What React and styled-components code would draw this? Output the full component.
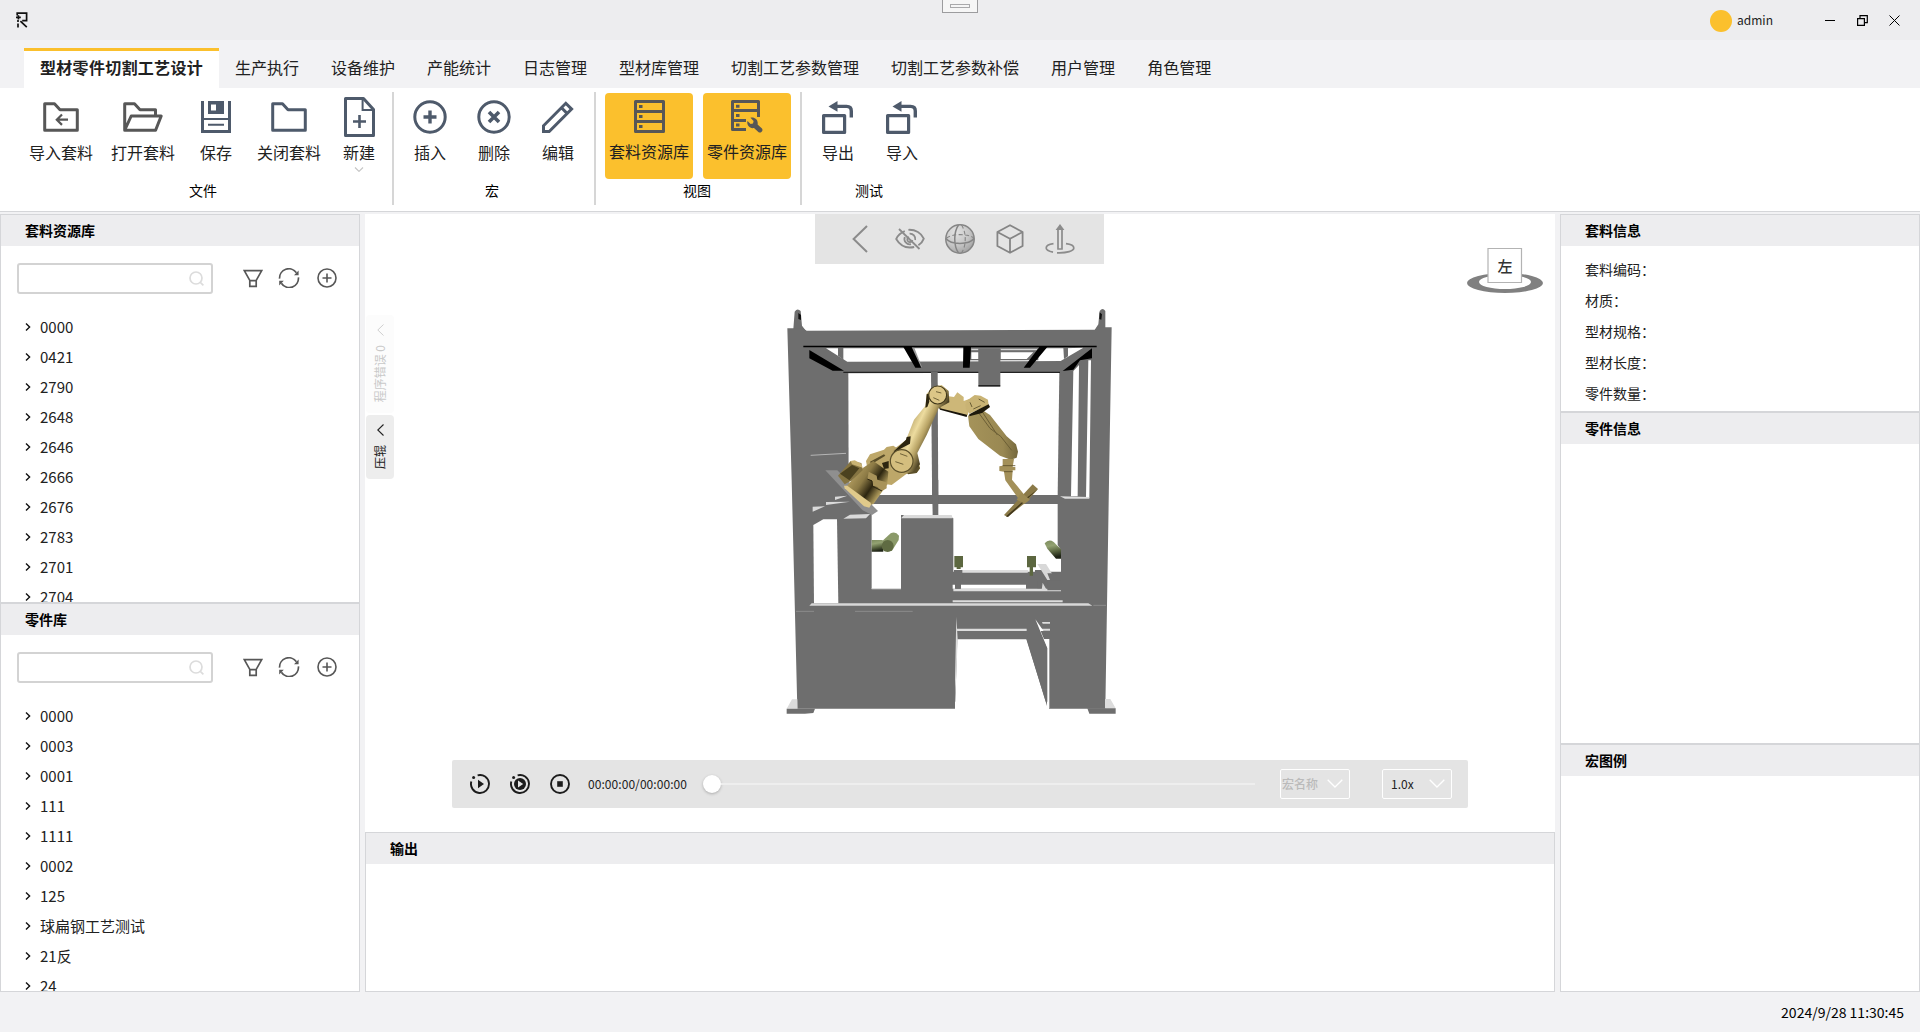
import React from 'react';
import styled, { createGlobalStyle } from 'styled-components';

const Global = createGlobalStyle`
  *, *::before, *::after { box-sizing: border-box; }
  body { margin: 0; background: #f2f2f4; overflow: hidden; }
  svg { display: block; flex: none; }
`;

const line = '#d5d6d9';
const slate = '#4e5a6b';
const dark = '#575757';

const Window = styled.div`
  width: 1920px;
  height: 1032px;
  display: flex;
  flex-direction: column;
  background: #f2f2f4;
  color: #212121;
  font-family: 'Noto Sans CJK SC', 'Noto Sans', sans-serif;
  font-size: 14px;
  line-height: 20px;
  white-space: nowrap;
`;

/* ---------- title bar ---------- */

const TitleBar = styled.header`
  position: relative;
  height: 40px;
  flex: none;
  display: flex;
  align-items: center;
  padding: 0 10px 0 16px;
  background: #ededef;
`;
const DragHandle = styled.div`
  position: absolute;
  left: 942px;
  top: -2px;
  width: 36px;
  height: 15px;
  border: 1px solid #9c9c9e;
  background: #f6f6f6;
  display: flex;
  align-items: center;
  justify-content: center;
  &::after {
    content: '';
    width: 20px;
    height: 4px;
    border: 1px solid #a9a9ab;
  }
`;
const UserBox = styled.div`
  margin-left: auto;
  display: flex;
  align-items: center;
  gap: 5px;
  font-size: 12px;
  line-height: 18px;
  padding-bottom: 1px;
`;
const Avatar = styled.i`
  width: 22px;
  height: 22px;
  margin-top: 3px;
  border-radius: 50%;
  background: #fbc02d;
`;
const WindowButtons = styled.div`
  display: flex;
  margin-left: 41px;
`;
const WindowButton = styled.button`
  width: 32px;
  height: 32px;
  padding: 0;
  border: 0;
  background: none;
  display: flex;
  align-items: center;
  justify-content: center;
`;

/* ---------- tabs ---------- */

const TabBar = styled.nav`
  height: 48px;
  flex: none;
  display: flex;
  align-items: flex-end;
  padding-left: 24px;
`;
const Tab = styled.a`
  height: 40px;
  width: ${(p) => (p.$active ? '195px' : 'auto')};
  padding: 0 16px;
  border-top: 3px solid ${(p) => (p.$active ? '#fbc02d' : 'transparent')};
  background: ${(p) => (p.$active ? '#fff' : 'transparent')};
  font-size: 16px;
  font-weight: ${(p) => (p.$active ? 700 : 400)};
  letter-spacing: ${(p) => (p.$active ? '0.3px' : '0')};
  line-height: 32px;
`;

/* ---------- ribbon ---------- */

const Ribbon = styled.section`
  height: 124px;
  flex: none;
  display: flex;
  padding-top: 4px;
  background: #fff;
  border-bottom: 1px solid ${line};
`;
const Group = styled.div`
  width: ${(p) => p.$width}px;
  height: 113px;
  padding: 1px ${(p) => p.$end || 0}px 0 ${(p) => p.$start || 0}px;
  border-right: ${(p) => (p.$last ? '0' : '2px solid #d6d6d6')};
  display: flex;
  flex-direction: column;
`;
const GroupTools = styled.div`
  display: flex;
  gap: ${(p) => p.$gap || 0}px;
`;
const GroupLabel = styled.div`
  margin-top: 1px;
  padding-right: ${(p) => p.$shift || 4}px;
  text-align: center;
  color: #000;
`;
const Tool = styled.button`
  width: ${(p) => p.$width || 64}px;
  height: 86px;
  padding: 2px 0 0;
  border: 0;
  border-radius: 4px;
  background: ${(p) => (p.$active ? '#fbc02d' : 'none')};
  font: 16px/24px 'Noto Sans CJK SC', sans-serif;
  color: #212121;
  display: flex;
  flex-direction: column;
  align-items: center;
  svg + svg { margin: 0; }
`;
const ToolIcon = styled.span`
  height: 44px;
  margin-bottom: ${(p) => (p.$active ? 0 : 1)}px;
  padding-bottom: ${(p) => (p.$active ? 2 : 0)}px;
  display: flex;
  align-items: center;
`;
const DropMark = styled.span`
  margin-top: 3px;
`;

/* ---------- panels ---------- */

const Workspace = styled.main`
  height: 780px;
  flex: none;
  display: grid;
  grid-template-columns: 360px 1190px 360px;
  column-gap: 5px;
  padding-top: 2px;
`;
const Column = styled.div`
  display: flex;
  flex-direction: column;
  min-height: 0;
`;
const Panel = styled.section`
  height: ${(p) => p.$height}px;
  flex: none;
  overflow: hidden;
  background: #fff;
  border: 1px solid ${line};
`;
const PanelHeader = styled.h2`
  margin: 0;
  height: 31px;
  padding-left: 24px;
  background: #ededef;
  color: #000;
  font-size: 14px;
  font-weight: 700;
  line-height: 31px;
`;
const SearchRow = styled.div`
  display: flex;
  align-items: center;
  padding: 17px 0 0 16px;
`;
const SearchBox = styled.div`
  width: 196px;
  height: 31px;
  border: 2px solid #d3d3d3;
  border-radius: 3px;
  display: flex;
  align-items: center;
  justify-content: flex-end;
  padding-right: 7px;
`;
const SearchTools = styled.div`
  display: flex;
  align-items: center;
  margin-left: 30px;
  gap: 15px;
  padding-bottom: 1px;
  svg:last-child { margin-left: 2px; }
`;
const Tree = styled.ul`
  list-style: none;
  margin: 0;
  padding: 18px 0 0 24px;
`;
const TreeItem = styled.li`
  height: 30px;
  display: flex;
  align-items: center;
  gap: 9px;
  font-size: 15px;
  line-height: 30px;
`;
const InfoList = styled.div`
  padding: 8px 0 0 24px;
`;
const InfoRow = styled.div`
  height: 31px;
  line-height: 31px;
`;

/* ---------- viewport ---------- */

const Viewport = styled.section`
  position: relative;
  height: 618px;
  flex: none;
  overflow: hidden;
  background: #fff;
`;
const Scene = styled.svg`
  position: absolute;
  left: 395px;
  top: -9px;
`;
const ViewTools = styled.div`
  position: absolute;
  left: 450px;
  top: 0;
  width: 289px;
  height: 50px;
  padding: 0 0 0 20px;
  display: flex;
  align-items: center;
  background: #e4e4e4;
`;
const ViewTool = styled.button`
  width: 50px;
  height: 50px;
  padding: 0;
  border: 0;
  background: none;
  display: flex;
  align-items: center;
  justify-content: center;
`;
const SideTabs = styled.div`
  position: absolute;
  left: 1px;
  top: 101px;
  display: flex;
  flex-direction: column;
  gap: 2px;
`;
const SideTab = styled.div`
  width: 28px;
  height: ${(p) => p.$height}px;
  padding: 9px 0 0;
  border-radius: 4px;
  background: ${(p) => (p.$muted ? '#fcfcfc' : '#ededed')};
  color: ${(p) => (p.$muted ? '#c9c9c9' : '#212121')};
  display: flex;
  flex-direction: column;
  align-items: center;
  gap: 9px;
  font-size: 12px;
  line-height: 16px;
  span {
    writing-mode: vertical-rl;
    text-orientation: sideways;
    transform: rotate(180deg);
  }
`;
const ViewCube = styled.svg`
  position: absolute;
  left: 1100px;
  top: 29px;
`;
const Player = styled.div`
  position: absolute;
  left: 87px;
  top: 546px;
  width: 1016px;
  height: 48px;
  padding: 0 16px 0 18px;
  border-radius: 2px;
  background: #e4e4e4;
  display: flex;
  align-items: center;
  font-size: 12px;
`;
const PlayerButtons = styled.div`
  display: flex;
  gap: 20px;
`;
const Time = styled.span`
  width: 98px;
  margin: 0 0 1px 18px;
  letter-spacing: 0.06px;
`;
const Slider = styled.div`
  width: 552px;
  margin-left: 17px;
  height: 18px;
  display: flex;
  align-items: center;
  &::after {
    content: '';
    flex: 1;
    height: 2px;
    background: #eeeeee;
  }
`;
const Thumb = styled.i`
  width: 18px;
  height: 18px;
  border-radius: 50%;
  background: #fff;
  box-shadow: 0 1px 3px rgba(0, 0, 0, 0.25);
`;
const Select = styled.div`
  width: 70px;
  height: 30px;
  margin-left: ${(p) => p.$gap}px;
  padding: 0 6px 1px ${(p) => p.$pad}px;
  border: 1px solid #fff;
  border-radius: 2px;
  color: ${(p) => (p.$muted ? '#bababa' : '#212121')};
  font-weight: ${(p) => (p.$muted ? 500 : 400)};
  display: flex;
  align-items: center;
  justify-content: space-between;
`;

const StatusBar = styled.footer`
  flex: 1;
  display: flex;
  align-items: center;
  justify-content: flex-end;
  padding: 0 16px 0 0;
  color: #000;
`;

/* ---------- icons ---------- */

const Svg = ({ w, h = w, vb, color = slate, sw = 3, children }) => (
  <svg width={w} height={h} viewBox={vb || `0 0 ${w} ${h}`} fill="none" stroke={color} strokeWidth={sw}>
    {children}
  </svg>
);

const Logo = () => (
  <Svg w={14} h={17} color="#111" sw={1.7}>
    <path d="M1.2 3.4V1.1H10.6V8.7H6.2M2 8V10M2 11.5V15.6M4.4 9.2L10.8 15.2M0 5.4H4.8M2.4 3.2V7.6" />
  </Svg>
);
const FolderImport = () => (
  <Svg w={36} h={30} color={dark}>
    <path strokeLinejoin="round" d="M1.7 28.2V1.8H11.5L17 7.7H34.3V28.2Z" />
    <path strokeWidth="2.2" d="M25 17.7H14M19 12.5L13.8 17.7L19 22.9" />
  </Svg>
);
const FolderOpen = () => (
  <Svg w={40} h={30} color={dark}>
    <path strokeLinejoin="round" d="M1.7 28.2V1.8H11.5L17 7.7H32.5V13.6M1.7 28.2L8.2 14H38.2L32.6 28.2Z" />
  </Svg>
);
const Save = () => (
  <Svg w={30} h={32}>
    <path strokeWidth="3" d="M1.5 0V30.5H28.5V0" />
    <path strokeWidth="2" d="M2 18H28M7 23.8H23" />
    <path fill={slate} stroke="none" fillRule="evenodd" d="M7 0H23V13H7ZM10 3.5H15V9.5H10Z" />
  </Svg>
);
const Folder = () => (
  <Svg w={36} h={30}>
    <path strokeLinejoin="round" d="M1.7 28.2V1.8H11.5L17 7.7H34.3V28.2Z" />
  </Svg>
);
const NewFile = () => (
  <Svg w={31} h={40}>
    <path strokeLinejoin="round" d="M1.5 38.5V1.5H19.5L29.5 12.5V38.5Z" />
    <path strokeWidth="2" d="M18.6 2V13H29" />
    <path strokeWidth="2.6" d="M15.5 18V31M9 24.5H22" />
  </Svg>
);
const Insert = () => (
  <Svg w={34}>
    <circle cx="17" cy="17" r="15.2" />
    <path strokeWidth="3.4" d="M17 10.5V23.5M10.5 17H23.5" />
  </Svg>
);
const Remove = () => (
  <Svg w={34}>
    <circle cx="17" cy="17" r="15.2" />
    <path strokeWidth="3.6" d="M12 12L22 22M22 12L12 22" />
  </Svg>
);
const Edit = () => (
  <Svg w={32}>
    <path d="M1.5 30.5V24.8L23.8 2.3L29.6 8.1L7.2 30.5ZM19.5 6.8L25.3 12.6" />
  </Svg>
);
const Rack = () => (
  <Svg w={31} h={33} color={dark}>
    <path strokeLinejoin="round" d="M1.5 1.5H29.5V31.5H1.5ZM1.5 11.5H29.5M1.5 21.5H29.5" />
    <path d="M5 6.5H8.5M5 16.5H8.5M5 26.5H8.5" />
  </Svg>
);
const RackTool = () => (
  <Svg w={32} h={33} color={dark}>
    <path strokeLinejoin="round" d="M27.5 17V1.5H1.5V29.5H15M1.5 10.5H27.5M1.5 20.5H15" />
    <path d="M5 6.2H8.5M5 15.5H8.5M5 25H8.5" />
    <path fill={dark} stroke="none" d="M19.4 17.8L22.6 21L22 23.4L19.6 24L16.5 21C15.4 24.6 18.2 29 23 28L27.6 32.3C29.8 33.6 32.6 30.6 31 28.6L26.6 24.4C27.6 19.6 23 16.4 19.4 17.8Z" />
  </Svg>
);
const Export = () => (
  <Svg w={32} h={33}>
    <path strokeWidth="3.2" strokeLinejoin="round" d="M1.6 14.6H22.6V31.4H1.6Z" />
    <path strokeWidth="3.4" d="M12 5.4H24.6Q29.3 5.4 29.3 10V16.5" />
    <path fill={slate} stroke="none" d="M6.5 5.4L15.5 0V10.8Z" />
  </Svg>
);
const Chevron = ({ w, h, d, color, sw }) => (
  <Svg w={w} h={h} color={color} sw={sw}>
    <path d={d} />
  </Svg>
);
const SearchIcon = () => (
  <Svg w={15} h={15} color="#dcdcdc" sw={1.7}>
    <circle cx="7" cy="7" r="6" />
    <path d="M11.3 11.3L14.4 14.4" />
  </Svg>
);
const Filter = () => (
  <Svg w={20} h={19} color={dark} sw={1.7}>
    <path d="M1.3 1.6H18.7L13.2 11.4V17.4H6.8V11.4ZM6.8 11.6H13.2" />
  </Svg>
);
const Refresh = () => (
  <Svg w={22} h={20} color={dark} sw={1.7}>
    <path d="M1.6 10.6A9.2 9.2 0 0 1 18.4 4.8M20.4 9.4A9.2 9.2 0 0 1 3.4 15.2" />
    <path fill={dark} stroke="none" d="M20.6 2.6V7.2H16ZM1.2 17.4V12.8H5.8Z" />
  </Svg>
);
const Plus = () => (
  <Svg w={20} color={dark} sw={1.6}>
    <circle cx="10" cy="10" r="9" />
    <path d="M10 5.5V14.5M5.5 10H14.5" />
  </Svg>
);
const EyeOff = () => (
  <Svg w={30} h={22} color="#8b8b8b" sw={1.8}>
    <path d="M9.8 3.2C5 5 2.4 8.4 1.2 11C5 17.6 11.5 20.6 19.2 19M13.4 1.8C20.5 1.4 26.5 5.4 28.8 10.6C28 13 26 15.4 23.4 17.2" />
    <path d="M14.6 5.6A5.4 5.4 0 0 1 20.2 12M9.8 9A5.4 5.4 0 0 0 16 16.2M14 9A2.6 2.6 0 1 0 17.4 12" />
    <path d="M4 1L24.5 21" />
  </Svg>
);
const Globe = () => (
  <Svg w={30} color="#858585" sw={1.5}>
    <defs>
      <radialGradient id="globe" cx="35%" cy="25%" r="80%">
        <stop offset="0" stopColor="#e2e2e2" />
        <stop offset="0.6" stopColor="#c6c6c6" />
        <stop offset="1" stopColor="#a2a2a2" />
      </radialGradient>
    </defs>
    <circle cx="15" cy="15" r="14.2" fill="url(#globe)" />
    <path d="M1 14.5C6 21 24 21 29 14.5M13.5 1C8.5 8 8.5 22 13.5 29" />
    <path strokeDasharray="4 2.4" strokeWidth="1.1" d="M1.5 14C7 9.5 23 9.5 28.6 14M16.5 1C21.5 8 21.5 22 16.5 29" />
  </Svg>
);
const Cube = () => (
  <Svg w={28} h={30} color="#858585" sw={1.8}>
    <path strokeLinejoin="round" d="M14 1.2L26.6 8V22L14 28.8L1.4 22V8ZM1.4 8L14 14.8L26.6 8M14 14.8V28.8" />
  </Svg>
);
const Axis = () => (
  <Svg w={30} color="#8b8b8b" sw={1.7}>
    <path fill="#8b8b8b" stroke="none" d="M15 0L19.4 6H10.6Z" />
    <path d="M13 25V5.5M17 5.5V25M12.2 25H17.8" />
    <path d="M8.5 19.6C3.5 20.2 1.2 22 1.2 24C1.2 26.2 4.4 27.4 8 28.2M12 28.8C22 29.2 28.8 27 28.8 24C28.8 21.8 25.8 20.2 21 19.6" />
  </Svg>
);
const Play = () => (
  <Svg w={20} color="#1c1c1c" sw={1.9}>
    <path d="M7.6 1.3A9 9 0 1 1 1.3 7.6" />
    <circle cx="3.6" cy="3.6" r="1.5" fill="#1c1c1c" stroke="none" />
    <path fill="#1c1c1c" stroke="none" d="M8 5.8L14 10L8 14.2Z" />
  </Svg>
);
const PlayAll = () => (
  <Svg w={20} color="#1c1c1c" sw={1.9}>
    <path d="M7.6 1.3A9 9 0 1 1 1.3 7.6" />
    <circle cx="3.6" cy="3.6" r="1.5" fill="#1c1c1c" stroke="none" />
    <circle cx="10" cy="10" r="6" fill="#1c1c1c" stroke="none" />
    <path fill="#e4e4e4" stroke="none" d="M8 6.6L13.2 10L8 13.4Z" />
  </Svg>
);
const Stop = () => (
  <Svg w={20} color="#1c1c1c" sw={1.9}>
    <circle cx="10" cy="10" r="9" />
    <path fill="#1c1c1c" stroke="none" d="M7.2 7.2H12.8V12.8H7.2Z" />
  </Svg>
);

/* ---------- robot cell model ---------- */

const Cell = () => (
  <Scene width="400" height="525" viewBox="0 0 1200 1575">
    <defs>
      <linearGradient id="arm" gradientUnits="userSpaceOnUse" x1="440" y1="640" x2="530" y2="682">
        <stop offset="0" stopColor="#a8935a" />
        <stop offset="0.4" stopColor="#eddc9f" />
        <stop offset="0.65" stopColor="#b8a365" />
        <stop offset="1" stopColor="#2a230f" />
      </linearGradient>
      <linearGradient id="base" gradientUnits="userSpaceOnUse" x1="275" y1="800" x2="375" y2="868">
        <stop offset="0" stopColor="#b7a163" />
        <stop offset="0.35" stopColor="#8c7a45" />
        <stop offset="0.62" stopColor="#2c2510" />
        <stop offset="0.85" stopColor="#a08d52" />
        <stop offset="1" stopColor="#dcc687" />
      </linearGradient>
      <linearGradient id="fore" x1="0" y1="0" x2="1" y2="0">
        <stop offset="0" stopColor="#a5935a" />
        <stop offset="0.7" stopColor="#998852" />
        <stop offset="1" stopColor="#75683d" />
      </linearGradient>
      <linearGradient id="green" x1="0" y1="0" x2="0.2" y2="1">
        <stop offset="0" stopColor="#7d8c5e" />
        <stop offset="0.35" stopColor="#93a272" />
        <stop offset="0.65" stopColor="#5f6b45" />
        <stop offset="1" stopColor="#1f2416" />
      </linearGradient>
    </defs>

    {/* lifting lugs */}
    <path fill="#6e6e6e" d="M100 372L104 320Q112 308 122 318L126 362L140 380H100ZM1036 370L1036 318Q1028 306 1019 318L1015 358L1002 378Z" />
    <path fill="#111" d="M115 324L123 330V345L115 342ZM1019 322L1026 328L1024 344L1018 342Z" />

    {/* outer shell */}
    <path fill="#6e6e6e" d="M82 370H128L140 377L1005 374L1012 367H1055L1047 830L1036 1511H867V1490H585V1511H112L95 825Z" />
    {/* upper opening */}
    <path fill="#fff" d="M198 430H912L970 428L902 468L262 470Z" />
    <path fill="#6e6e6e" d="M234 428H250V464L234 452ZM910 428H924V454L912 462Z" />
    <path fill="#000" d="M130 422H1010V427H130ZM148 435L252 497H218L148 460ZM996 430V460L960 466L940 494L908 498Z" />
    <path fill="#9a9a9a" d="M455 428H463L486 487H480Z" />
    <path fill="#6e6e6e" d="M630 430H835V466H630Z" />
    <path fill="#fff" d="M722 442H820L800 462H722ZM634 442H656V462H634Z" />
    <path stroke="#e4e4e4" strokeWidth="3" d="M634 434H656M722 434H832" />
    <path fill="#000" d="M430 426H455L484 488H466ZM610 426H633L629 488H609ZM838 426H862L810 488H791Z" />

    {/* main opening */}
    <path fill="#fff" d="M265 505L898 503L893 870H266Z" />
    <path fill="#222" d="M250 500H900V504H250Z" />
    <path fill="#6e6e6e" d="M513 500H533L535 932H517Z" />
    <path fill="#6e6e6e" d="M655 430H721V541H655Z" />
    <path fill="#222" d="M655 540H721V545H655Z" />
    <path fill="#fff" d="M940 498L957 480L953 874H933ZM985 466H993L988 878H978Z" />
    <path fill="#ddd" d="M900 874L915 881H988V876Z" />
    <path stroke="#b5b5b5" strokeWidth="3" d="M152 751L258 745" />

    {/* lower openings */}
    <g transform="translate(0 825)">
      <path fill="#fff" d="M335 72H893V195L903 210V275H580V115L560 105H423V326H335Z" />
      <path fill="#fff" d="M160 135L190 118H231L235 370H162Z" />
      <path fill="#6e6e6e" d="M516 0H535V106H518Z" />
      <path fill="#6e6e6e" d="M423 115H578V372H423Z" />
      <path fill="#dadada" d="M423 115L432 105H575L578 115ZM158 95V80L195 79ZM198 75V66L270 65ZM225 60V50L262 47ZM250 116L270 104L330 102L318 115Z" />
      <path fill="#dcdcdc" d="M606 270H805L803 278H604ZM580 326H860L903 330V334H580ZM578 361H908V367H578ZM335 324H423V328H335Z" />
      <path fill="#fff" d="M603 314H798V326H603ZM578 314H585V326H578Z" />
      <path fill="#6e6e6e" d="M582 270H607V303H602V326H586V303H582ZM825 270H852V303H845V325H832V303H825Z" />
      <path fill="#d8d8d8" d="M832 252H858L888 300H862ZM148 377L155 370H985L997 377ZM848 308L860 330H845Z" />
      <path fill="#6e6e6e" d="M862 280H903V300H870ZM862 302H903V331H862Z" />
      <path stroke="#9c9c9c" strokeWidth="2" d="M108 394H162M285 394H458M1000 376H1038" />

      <path fill="#fff" d="M592 478H799L862 680L867 692H585Z" />
      <path fill="#dcdcdc" d="M590 446H800V453H592ZM840 446H870V452H842ZM846 426H870V431H848ZM589 410L593 478L587 640L585 600Z" />
      <path fill="#fff" d="M826 418L868 478V685L862 682V505Z" />
      <path fill="#6e6e6e" d="M842 453H870V477H852ZM800 478L824 420L861 505V678Z" />
      <path fill="#dcdcdc" d="M80 686L96 658H112V686ZM1035 657H1051L1067 685H1035Z" />
      <path fill="#6e6e6e" d="M80 686H165L160 699L135 701H80ZM982 685H1067V701H988Z" />

      {/* rollers */}
      <path fill="url(#green)" d="M335 180L368 180L370 215H335Z" />
      <path fill="#8b9a69" d="M366 184L392 160Q406 152 417 167L416 180L396 212L372 214Z" />
      <ellipse cx="383" cy="198" rx="18" ry="18" fill="#5f6b42" />
      <path fill="url(#green)" d="M854 190Q866 176 881 186L903 208V236H888L862 206Z" />
      <path fill="#5c6740" d="M583 228H609V262H602V267H590V262H583ZM801 228H828V262H819V287H809V262H801Z" />
    </g>

    {/* wrist and forearm */}
    <path fill="#8f8f8f" d="M196 796L232 796L354 918L336 930L308 916Z" />
    <path fill="#17130a" d="M535 604L622 628L620 636L540 614Z" />
    <path fill="#cdb778" d="M556 572L582 576L592 562L611 576V588L628 582L624 630L540 610Z" />
    <path fill="url(#fore)" d="M624 632L662 612L690 630L740 694L768 718L774 740L770 758L752 764L720 752L655 702L628 664Z" />
    <path stroke="#6b5e35" strokeWidth="3" fill="none" d="M655 622L690 670L722 694L755 736M664 616L712 690" />
    <path fill="#c9b374" d="M616 600L622 586L644 570L662 572L684 584L686 600L660 612L628 626L618 612Z" />
    <path stroke="#6b5e35" strokeWidth="3" fill="none" d="M630 592L636 606M656 582L674 592M640 612L662 602" />
    <path fill="#1e190b" d="M686 598L690 606L666 624L628 634L628 628L662 610Z" />
    <path fill="#a39059" d="M728 762H762L758 786H766V796H758L756 824L800 878L784 893L736 826L732 800L718 798V784L728 782Z" />
    <path stroke="#5b4f2a" strokeWidth="2.5" fill="none" d="M728 782H766M732 800H758" />
    <path fill="#8b7a48" d="M818 838L834 852L800 890L742 936L732 930Z" />
    <path fill="#40371b" d="M834 852L744 936L738 934L806 874Z" />
    <path fill="#9c8a53" d="M784 862L810 884L794 896L770 884Z" />

    {/* turntable and main link */}
    <path fill="#bda769" d="M318 768L330 748L372 734L380 726L400 722L420 735L478 775L480 790L470 804L440 806L395 840L330 830Z" />
    <path fill="#5b4f2a" d="M440 800L474 778L480 790L470 804L444 808ZM330 770L372 748L376 752L334 778Z" />
    <path fill="url(#arm)" d="M496 608L500 566L520 545L545 540L566 558L568 592L536 610L500 690L472 744L480 778L460 800L430 808L395 792L390 760L402 732L438 705L462 644L498 600Z" />
    <path fill="#2c2510" d="M402 738L438 704L440 696L452 694L450 716L420 732L398 764ZM496 608L500 568L506 566L508 590L502 606Z" />
    <circle cx="533" cy="570" r="27" fill="#dcc687" stroke="#40371b" strokeWidth="3.5" />
    <circle cx="425" cy="768" r="34" fill="#d4be7e" stroke="#5b4f2a" strokeWidth="3.5" />
    <path stroke="#5b4f2a" strokeWidth="2.5" fill="none" d="M420 746L442 754M406 770L430 778M520 578L538 586M528 560L544 564" />
    <path fill="url(#base)" d="M304 792L340 768L385 800L382 838L340 898L318 900L258 846Z" />
    <path fill="#857442" d="M234 812L272 768L304 774L308 796L276 826L254 838Z" />
    <path fill="#4b411f" d="M240 806L276 780L298 790L268 826Z" />
    <path fill="#c9b374" d="M272 768L284 766L304 776L308 788L276 778Z" />
    <path fill="#e0ca8b" d="M252 842L262 842L330 892L334 898L328 908L312 904L254 850Z" />
    <path fill="#2c2510" d="M366 774L386 768V790L372 792Z" />
    <path fill="#a8935a" d="M326 800L350 812L352 824L380 832L380 850L366 858L352 846L338 842L336 826L322 822Z" />
    <path stroke="#2c2510" strokeWidth="3" fill="none" d="M322 822L336 828L338 844L366 858" />
  </Scene>
);

const Orientation = () => (
  <ViewCube width="90" height="60" viewBox="0 0 90 60">
    <path fill="#808080" fillRule="evenodd" d="M2 40A38 10 0 0 1 78 40A38 10 0 0 1 2 40ZM14 39A26 7 0 0 0 66 39A26 7 0 0 0 14 39Z" />
    <path fill="#fff" stroke="#b3b3b3" strokeWidth="1.2" d="M23 5.5H56.5V39.5H23Z" />
    <text x="40" y="28.5" textAnchor="middle" fontFamily="'Noto Sans CJK SC', sans-serif" fontSize="15" fontWeight="500" fill="#333">左</text>
  </ViewCube>
);

/* ---------- data ---------- */

const tabs = ['型材零件切割工艺设计', '生产执行', '设备维护', '产能统计', '日志管理', '型材库管理', '切割工艺参数管理', '切割工艺参数补偿', '用户管理', '角色管理'];

const groups = [
  {
    label: '文件', width: 394, start: 20, shift: 6,
    tools: [['导入套料', FolderImport, 82], ['打开套料', FolderOpen, 82], ['保存', Save, 64], ['关闭套料', Folder, 82], ['新建', NewFile, 58]],
  },
  { label: '宏', width: 202, start: 4, end: 4, tools: [['插入', Insert], ['删除', Remove], ['编辑', Edit]] },
  { label: '视图', width: 206, start: 9, end: 7, gap: 10, active: true, tools: [['套料资源库', Rack, 88], ['零件资源库', RackTool, 88]] },
  { label: '测试', width: 134, start: 4, last: true, tools: [['导出', Export], ['导入', Export]] },
];

const libraries = [
  { title: '套料资源库', items: ['0000', '0421', '2790', '2648', '2646', '2666', '2676', '2783', '2701', '2704'] },
  { title: '零件库', items: ['0000', '0003', '0001', '111', '1111', '0002', '125', '球扁钢工艺测试', '21反', '24'] },
];

const info = ['套料编码：', '材质：', '型材规格：', '型材长度：', '零件数量：'];

const Library = ({ title, items }) => (
  <Panel $height={389}>
    <PanelHeader>{title}</PanelHeader>
    <SearchRow>
      <SearchBox><SearchIcon /></SearchBox>
      <SearchTools><Filter /><Refresh /><Plus /></SearchTools>
    </SearchRow>
    <Tree>
      {items.map((name) => (
        <TreeItem key={name}>
          <Chevron w={6} h={8} color="#111" sw={1.4} d="M1 0.6L4.6 4L1 7.4" />
          {name}
        </TreeItem>
      ))}
    </Tree>
  </Panel>
);

export default function App() {
  return (
    <Window>
      <Global />
      <TitleBar>
        <Logo />
        <DragHandle />
        <UserBox><Avatar />admin</UserBox>
        <WindowButtons>
          <WindowButton><Svg w={10} color="#000" sw={1}><path d="M0 5.5H10" /></Svg></WindowButton>
          <WindowButton><Svg w={11} color="#000" sw={1.2}><path d="M0.6 3.6H7.4V10.4H0.6ZM3 3.4V0.7H10.3V7.6H7.6" /></Svg></WindowButton>
          <WindowButton><Svg w={11} color="#000" sw={1}><path d="M0.5 0.5L10.5 10.5M10.5 0.5L0.5 10.5" /></Svg></WindowButton>
        </WindowButtons>
      </TitleBar>

      <TabBar>
        {tabs.map((name, i) => <Tab key={name} $active={i === 0}>{name}</Tab>)}
      </TabBar>

      <Ribbon>
        {groups.map((g) => (
          <Group key={g.label} $width={g.width} $start={g.start} $end={g.end} $last={g.last}>
            <GroupTools $gap={g.gap}>
              {g.tools.map(([name, Icon, width]) => (
                <Tool key={name} $width={width} $active={g.active}>
                  <ToolIcon $active={g.active}><Icon /></ToolIcon>
                  {name}
                  {name === '新建' && (
                    <DropMark>
                      <Chevron w={10} h={5} color="#c4c4c4" sw={1.1} d="M1 0.5L5 4.4L9 0.5" />
                    </DropMark>
                  )}
                </Tool>
              ))}
            </GroupTools>
            <GroupLabel $shift={g.shift}>{g.label}</GroupLabel>
          </Group>
        ))}
      </Ribbon>

      <Workspace>
        <Column>
          {libraries.map((lib) => <Library key={lib.title} {...lib} />)}
        </Column>

        <Column>
          <Viewport>
            <Cell />
            <ViewTools>
              <ViewTool><Chevron w={16} h={28} color="#8b8b8b" sw={2} d="M15 1L1.6 14L15 27" /></ViewTool>
              <ViewTool><EyeOff /></ViewTool>
              <ViewTool><Globe /></ViewTool>
              <ViewTool><Cube /></ViewTool>
              <ViewTool><Axis /></ViewTool>
            </ViewTools>
            <SideTabs>
              <SideTab $height={98} $muted>
                <Chevron w={7} h={12} color="#cfcfcf" sw={1} d="M6.5 0.5L0.8 6L6.5 11.5" />
                <span>程序错误 0</span>
              </SideTab>
              <SideTab $height={64}>
                <Chevron w={7} h={12} color="#222" sw={1.1} d="M6.5 0.5L0.8 6L6.5 11.5" />
                <span>压辊</span>
              </SideTab>
            </SideTabs>
            <Orientation />
            <Player>
              <PlayerButtons><Play /><PlayAll /><Stop /></PlayerButtons>
              <Time>00:00:00/00:00:00</Time>
              <Slider><Thumb /></Slider>
              <Select $gap={25} $pad={1} $muted>
                宏名称
                <Chevron w={16} h={9} color="#fff" sw={1.3} d="M0.7 0.7L8 8L15.3 0.7" />
              </Select>
              <Select $gap={32} $pad={8}>
                1.0x
                <Chevron w={16} h={9} color="#fff" sw={1.3} d="M0.7 0.7L8 8L15.3 0.7" />
              </Select>
            </Player>
          </Viewport>
          <Panel $height={160}><PanelHeader>输出</PanelHeader></Panel>
        </Column>

        <Column>
          <Panel $height={198}>
            <PanelHeader>套料信息</PanelHeader>
            <InfoList>{info.map((t) => <InfoRow key={t}>{t}</InfoRow>)}</InfoList>
          </Panel>
          <Panel $height={332}><PanelHeader>零件信息</PanelHeader></Panel>
          <Panel $height={248}><PanelHeader>宏图例</PanelHeader></Panel>
        </Column>
      </Workspace>

      <StatusBar>2024/9/28 11:30:45</StatusBar>
    </Window>
  );
}
